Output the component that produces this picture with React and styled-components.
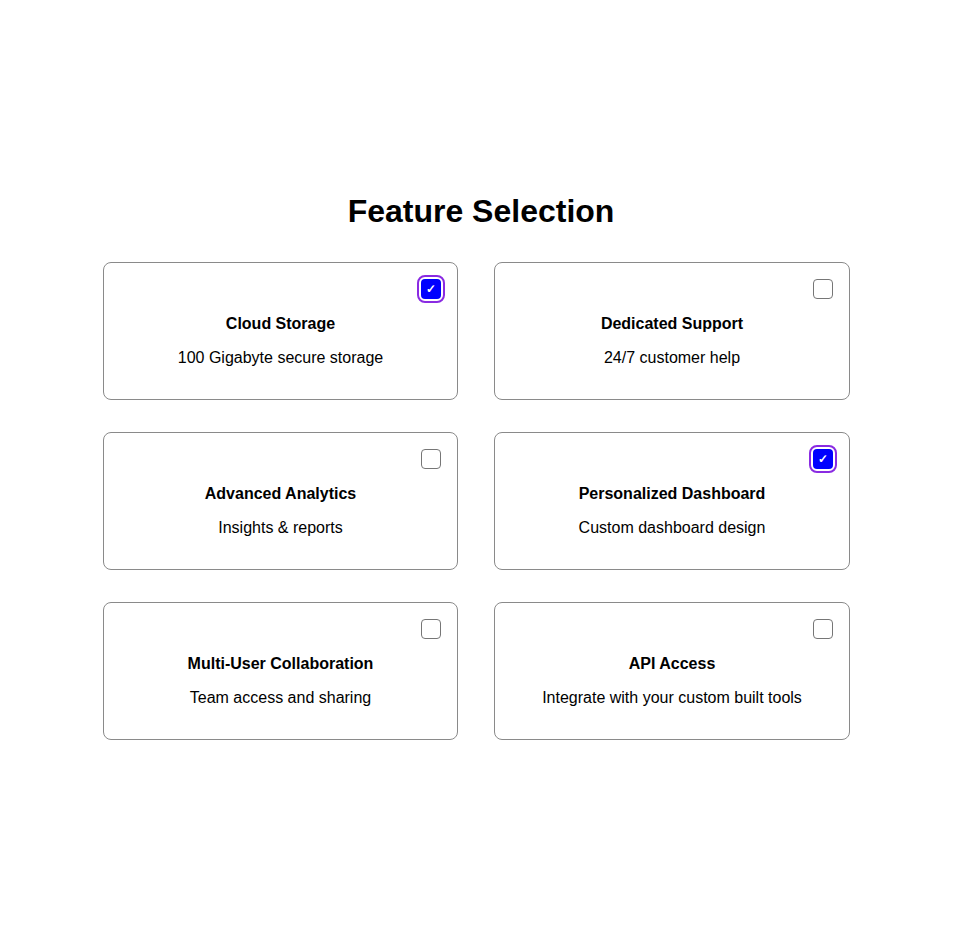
import React, { useState } from "react";
import styled, { createGlobalStyle } from "styled-components";

const GlobalStyle = createGlobalStyle`
  body {
    margin: 0;
    font-family: "Liberation Sans", Arial, sans-serif;
    color: #000;
    background: #fff;
  }
`;

const features = [
	{ id: "cloud", title: "Cloud Storage", desc: "100 Gigabyte secure storage" },
	{ id: "support", title: "Dedicated Support", desc: "24/7 customer help" },
	{ id: "analytics", title: "Advanced Analytics", desc: "Insights & reports" },
	{ id: "dashboard", title: "Personalized Dashboard", desc: "Custom dashboard design" },
	{ id: "collab", title: "Multi-User Collaboration", desc: "Team access and sharing" },
	{ id: "api", title: "API Access", desc: "Integrate with your custom built tools" },
];

function App() {
	const [selected, setSelected] = useState({ cloud: true, dashboard: true });
	const toggle = (id) => setSelected((s) => ({ ...s, [id]: !s[id] }));

	return (
		<Page>
			<GlobalStyle />
			<Container>
				<Title>Feature Selection</Title>
				<Grid>
					{features.map((f) => (
						<Card key={f.id} onClick={() => toggle(f.id)}>
							<CheckRow>
								<Check checked={!!selected[f.id]} role="checkbox" aria-checked={!!selected[f.id]}>
									{selected[f.id] && "✓"}
								</Check>
							</CheckRow>
							<CardTitle>{f.title}</CardTitle>
							<CardDesc>{f.desc}</CardDesc>
						</Card>
					))}
				</Grid>
			</Container>
		</Page>
	);
}

export default App;

const Page = styled.div`
  min-height: 100vh;
  display: flex;
  flex-direction: column;
  justify-content: center;
  padding-left: 103px;
  padding-bottom: 4px;
  box-sizing: border-box;
`;

const Container = styled.div`
  width: 756px;
`;

const Title = styled.h1`
  margin: 0 0 32px;
  font-size: 32px;
  font-weight: bold;
  text-align: center;
  line-height: 37px;
`;

const Grid = styled.div`
  display: grid;
  grid-template-columns: 355px 356px;
  column-gap: 36px;
  row-gap: 32px;
`;

const Card = styled.div`
  border: 1px solid #8a8a8a;
  border-radius: 8px;
  padding: 16px 16px 32px;
  display: flex;
  flex-direction: column;
  align-items: center;
  cursor: pointer;
  background: #fff;
`;

const CheckRow = styled.div`
  width: 100%;
  display: flex;
  justify-content: flex-end;
`;

const Check = styled.span`
  width: 20px;
  height: 20px;
  box-sizing: border-box;
  border-radius: 4px;
  display: flex;
  align-items: center;
  justify-content: center;
  font-size: 12px;
  font-weight: bold;
  color: #fff;
  border: ${({ checked }) => (checked ? "none" : "1px solid #767676")};
  background: ${({ checked }) => (checked ? "#0000ff" : "#fff")};
  outline: ${({ checked }) => (checked ? "2px solid #8a2be2" : "none")};
  outline-offset: 2px;
`;

const CardTitle = styled.div`
  margin-top: 16px;
  font-size: 16px;
  font-weight: bold;
  line-height: 18px;
`;

const CardDesc = styled.div`
  margin-top: 16px;
  font-size: 16px;
  line-height: 18px;
`;
